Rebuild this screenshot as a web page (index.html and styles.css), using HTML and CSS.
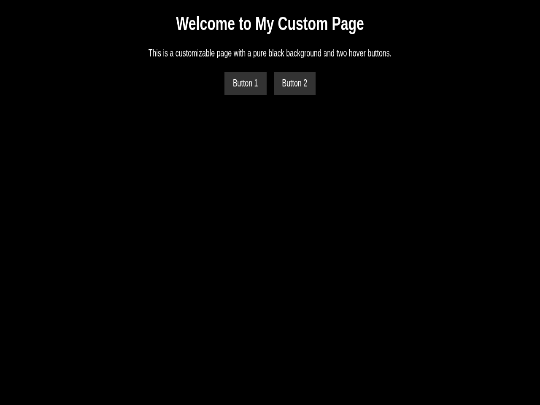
FILE: index.html
```html
<!DOCTYPE html>
<html lang="en">
<head>
<meta charset="utf-8">
<title>My Custom Page</title>
<link rel="stylesheet" href="styles.css">
</head>
<body>
<div class="frame">
  <div class="viewport">
    <main class="page">
      <h1 class="title">Welcome to My Custom Page</h1>
      <p class="lead">This is a customizable page with a pure black background and two hover buttons.</p>
      <div class="actions">
        <button class="btn" type="button">Button 1</button>
        <button class="btn" type="button">Button 2</button>
      </div>
    </main>
  </div>
</div>
</body>
</html>
```

FILE: styles.css
```css
html, body {
  margin: 0;
  padding: 0;
  background: #000;
  overflow: hidden;
}

.frame {
  width: 540px;
  height: 405px;
  overflow: hidden;
}

.viewport {
  width: 1280px;
  height: 675px;
  transform: scale(0.421875, 0.6);
  transform-origin: 0 0;
  will-change: transform;
  -webkit-font-smoothing: antialiased;
}

.page {
  padding: 0 8px;
  font-family: "Liberation Sans", Arial, sans-serif;
  color: #fff;
  text-align: center;
  display: flow-root;
}

.title {
  font-size: 32px;
  font-weight: bold;
  margin: 21.44px 0;
}

.lead {
  font-size: 16px;
  margin: 16px 0;
}

.actions {
  display: flex;
  justify-content: center;
  gap: 17px;
  padding-top: 6px;
}

.btn {
  font-family: "Liberation Sans", Arial, sans-serif;
  font-size: 16px;
  color: #fff;
  background: #333;
  border: none;
  padding: 10px 20px;
  cursor: pointer;
}

.btn:hover {
  background: #555;
}
```
